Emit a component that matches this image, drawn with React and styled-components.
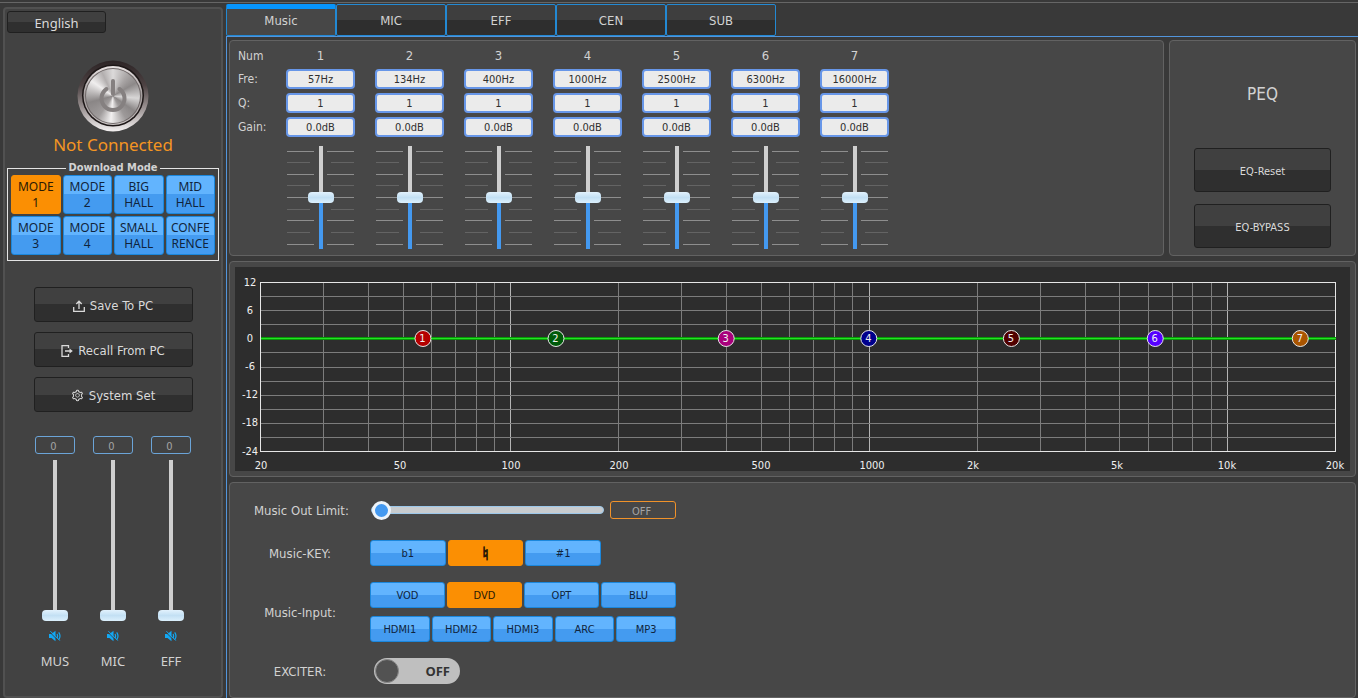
import { useState } from 'react';
import styled, { createGlobalStyle, css } from 'styled-components';
import { AiOutlineSetting } from 'react-icons/ai';

const GlobalStyle = createGlobalStyle`
    * {
        box-sizing: border-box;
    }

    body {
        margin: 0;
        background: #393939;
        color: #d2d2d2;
        font-family: "DejaVu Sans Condensed", "DejaVu Sans", sans-serif;
        font-size: 12px;
    }

    button, input {
        font-family: inherit;
        font-size: inherit;
        color: inherit;
        margin: 0;
        padding: 0;
    }
`

const Shell = styled.div`
    display: grid;
    grid-template-columns: 226px 1fr;
    min-height: 100vh;
    padding-top: 2px;
    background: linear-gradient(#666, #666) 0 2px / 100% 1px no-repeat #393939;
`

const Sidebar = styled.aside`
    display: flex;
    flex-direction: column;
    align-items: center;
    margin: 5px 3px 0;
    padding: 2px;
    border: 2px solid #515151;
    border-radius: 4px;
    background: #424242;
`

const DarkButton = styled.button`
    display: flex;
    align-items: center;
    justify-content: center;
    gap: 5px;
    width: ${({ $width }) => $width}px;
    height: ${({ $height }) => $height}px;
    padding-top: 2px;
    font-size: ${({ $size }) => $size}px;
    border: 1px solid #202020;
    border-radius: 3px;
    background: linear-gradient(#404040 50%, #2f2f2f 50%);
    color: #dadada;
`

const LanguageButton = styled(DarkButton)`
    align-self: flex-start;
    font-family: "Noto Sans", sans-serif;
`

const PowerButton = styled.button`
    display: grid;
    place-items: center;
    width: 72px;
    height: 72px;
    margin-top: 27px;
    border: none;
    border-radius: 50%;
    background: none;

    svg {
        grid-area: 1 / 1;
    }
`

const PowerFace = styled.span`
    grid-area: 1 / 1;
    width: 54px;
    height: 54px;
    border-radius: 50%;
    background: conic-gradient(#dcdada, #a9a5a5 35deg, #8d8989 60deg, #d8d6d6 95deg, #8b8787 125deg,
        #9d9999 150deg, #f2f0f0 185deg, #a09c9c 215deg, #8a8686 255deg, #f0eeee 305deg, #b2aeae 335deg, #dcdada);
`

const Status = styled.div`
    margin-top: 1px;
    font-family: "Noto Sans", sans-serif;
    font-size: 17px;
    line-height: 24px;
    color: #f49522;
`

const ModeBox = styled.fieldset`
    width: 212px;
    margin: 4px 0 0;
    padding: 0 3px 5px;
    border: 1px solid #e4e4e4;

    legend {
        margin: 0 auto;
        padding: 0 2px;
        font-size: 11px;
        font-weight: bold;
        line-height: 14px;
    }
`

const ModeGrid = styled.div`
    display: grid;
    grid-template-columns: repeat(4, 1fr);
    grid-auto-rows: 39px;
    gap: 2px;
`

const BlueButton = styled.button`
    height: 26px;
    padding-top: 1px;
    border: 1px solid #1b87dc;
    border-radius: 3px;
    background: linear-gradient(#62b4fe 50%, #449bf0 50%);
    color: #10243c;
    font-size: 11px;

    ${({ $active }) => $active && css`
        border-color: #fb8f03;
        background: #fb8f03;
        color: #2a1a04;
    `}
`

const ModeButton = styled(BlueButton)`
    height: auto;
    font-family: "Noto Sans", sans-serif;
    font-size: 12px;
    line-height: 16px;
    white-space: pre-line;
`

const Actions = styled.div`
    display: flex;
    flex-direction: column;
    gap: 10px;
    margin-top: 26px;
`

const Faders = styled.div`
    display: flex;
    gap: 18px;
    margin-top: 24px;
`

const Fader = styled.div`
    display: flex;
    flex-direction: column;
    align-items: center;
    width: 40px;

    label {
        margin-top: 10px;
        font-family: "Noto Sans", sans-serif;
        font-size: 13px;
        line-height: 18px;
    }
`

const ValueBox = styled.input`
    width: ${({ $width }) => $width}px;
    height: 18px;
    padding: 2px 3px 0 0;
    border: 1px solid ${({ $color }) => $color};
    border-radius: 3px;
    background: transparent;
    color: #a4a4a4;
    font-size: 11px;
    text-align: center;
`

const VerticalRange = styled.input`
    appearance: none;
    writing-mode: vertical-lr;
    direction: rtl;
    width: 26px;
    height: ${({ $height }) => $height}px;
    background: linear-gradient(#cfcfcf ${({ $empty }) => $empty}%, #4499f0 ${({ $empty }) => $empty}%) center / 4px 100% no-repeat;

    &::-webkit-slider-thumb {
        appearance: none;
        width: 26px;
        height: 11px;
        border-radius: 4px;
        background: linear-gradient(#e2f2fd, #c3e0f4 50%, #dcf0fc);
    }
`

const ChannelRange = styled(VerticalRange)`
    margin-top: 6px;
`

const MuteButton = styled.button`
    display: flex;
    height: 12px;
    margin-top: 9px;
    border: none;
    background: none;
`

const Main = styled.main`
    display: flex;
    flex-direction: column;
    min-width: 0;
    padding-top: 2px;
`

const Tabs = styled.nav`
    display: flex;
`

const Tab = styled.button`
    width: 110px;
    height: 32px;
    border: 1px solid #2389d3;
    border-radius: 2px;
    background: linear-gradient(#3e3e3e 50%, #2e2e2e 50%);
    font-size: 13px;

    ${({ $active }) => $active && css`
        border-top: 5px solid #0794fb;
        padding-bottom: 4px;
        background: #474747;
    `}
`

const Pane = styled.div`
    flex: 1;
    display: flex;
    flex-direction: column;
    gap: 5px;
    padding: 3px 2px 0;
    border-top: 1px solid #5295dc;
    border-left: 1px solid #5295dc;
`

const TopRow = styled.div`
    display: grid;
    grid-template-columns: 1fr 187px;
    gap: 5px;
`

const Card = styled.section`
    border: 1px solid #626262;
    border-radius: 4px;
    background: #474747;
`

const EqCard = styled(Card)`
    display: flex;
    padding: 6px 8px;
`

const EqLabels = styled.div`
    display: grid;
    grid-template-rows: 18px;
    grid-auto-rows: 20px;
    gap: 4px;
    align-content: start;
    align-items: center;
    width: 48px;
`

const Bands = styled.div`
    display: grid;
    grid-template-columns: repeat(7, 1fr);
    gap: 20px;
    width: 602px;
`

const Band = styled.div`
    display: flex;
    flex-direction: column;
    gap: 4px;
`

const BandNumber = styled.div`
    font-size: 13px;
    line-height: 18px;
    text-align: center;
`

const BandInput = styled.input`
    width: 100%;
    height: 20px;
    padding-top: 1px;
    border: 2px solid #6796e8;
    border-radius: 4px;
    background: #ebebeb;
    color: #303030;
    font-size: 11px;
    text-align: center;
`

const BandSlider = styled.div`
    display: grid;
    justify-items: center;
    margin-top: 5px;

    > * {
        grid-area: 1 / 1;
    }
`

const PeqCard = styled(Card)`
    display: flex;
    flex-direction: column;
    align-items: center;
    gap: 12px;
    padding-top: 41px;

    h2 {
        margin: 0 0 30px;
        font-size: 17px;
        font-weight: normal;
        line-height: 24px;
    }
`

const ChartCard = styled(Card)`
    padding: 5px;

    svg {
        display: block;
        width: 100%;
        height: auto;
        background: #2d2d2d;
    }
`

const SettingsCard = styled(Card)`
    flex: 1;
    padding: 17px 24px 12px;
`

const SettingRow = styled.div`
    display: grid;
    grid-template-columns: 92px 306px;
    column-gap: 24px;
    align-items: center;
    margin-bottom: ${({ $gap }) => $gap}px;
`

const SettingLabel = styled.label`
    font-size: 13px;
    text-align: center;
    white-space: nowrap;
`

const LimitControl = styled.div`
    display: flex;
    align-items: center;
    gap: 6px;
    padding-left: 1px;
`

const LimitRange = styled.input`
    appearance: none;
    flex: 1;
    min-width: 0;
    height: 20px;
    background: none;

    &::-webkit-slider-runnable-track {
        height: 8px;
        border: 1px solid #9cc8ea;
        border-radius: 4px;
        background: #c8cccf;
    }

    &::-webkit-slider-thumb {
        appearance: none;
        width: 19px;
        height: 19px;
        margin-top: -6px;
        border: 3px solid #eef4fa;
        border-radius: 50%;
        background: #4499f0;
    }
`

const ButtonRows = styled.div`
    display: flex;
    flex-direction: column;
    gap: 8px;
`

const ButtonRow = styled.div`
    display: grid;
    grid-template-columns: repeat(${({ $columns }) => $columns}, 1fr);
    gap: 2px;
    width: ${({ $width }) => $width || 306}px;
`

const Natural = styled.span`
    font-family: "DejaVu Sans", sans-serif;
    font-size: 18px;
    line-height: 20px;
    -webkit-text-stroke: 1px currentColor;
`

const Toggle = styled.label`
    display: flex;
    align-items: center;
    justify-content: space-between;
    width: 86px;
    height: 26px;
    margin-left: 4px;
    padding: 0 10px 0 1px;
    border-radius: 13px;
    background: #bfbfbf;
    color: #333;
    font-family: "Noto Sans", sans-serif;
    font-size: 13px;
    font-weight: bold;

    input {
        appearance: none;
        width: 24px;
        height: 24px;
        border: 1px solid #8b8b8b;
        border-radius: 50%;
        background: #525252;
    }
`

const modes = ['MODE\n1', 'MODE\n2', 'BIG\nHALL', 'MID\nHALL', 'MODE\n3', 'MODE\n4', 'SMALL\nHALL', 'CONFE\nRENCE'];

const tabs = ['Music', 'MIC', 'EFF', 'CEN', 'SUB'];

const bands = [
    { freq: 57, color: '#b40000' },
    { freq: 134, color: '#005a0a' },
    { freq: 400, color: '#a8007c' },
    { freq: 1000, color: '#00008c' },
    { freq: 2500, color: '#500000' },
    { freq: 6300, color: '#5500ff' },
    { freq: 16000, color: '#aa5500' },
];

const freqLabels = [
    { text: '20', x: 26 },
    { text: '50', x: 165 },
    { text: '100', x: 276 },
    { text: '200', x: 384 },
    { text: '500', x: 526 },
    { text: '1000', x: 637 },
    { text: '2k', x: 738 },
    { text: '5k', x: 882 },
    { text: '10k', x: 992 },
    { text: '20k', x: 1100 },
];

const PowerIcon = () => (
    <svg width="72" height="72" viewBox="0 0 72 72" fill="none" aria-hidden="true">
        <path d="M29.5 29a11.500 11.500 0 1 0 13 0" stroke="#858080" strokeWidth="4" strokeLinecap="round" />
        <path d="M36 21v13" stroke="#858080" strokeWidth="4" strokeLinecap="round" />
    </svg>
);

const PowerRing = () => (
    <svg width="72" height="72" viewBox="0 0 72 72" aria-hidden="true">
        <defs>
            <linearGradient id="outerRing" x1="0" y1="0" x2="0" y2="1">
                <stop offset="0" stopColor="#2c2425" />
                <stop offset="0.35" stopColor="#4d4243" />
                <stop offset="0.7" stopColor="#a39b9b" />
                <stop offset="1" stopColor="#f4f1f1" />
            </linearGradient>
            <linearGradient id="innerRing" x1="0" y1="0" x2="0" y2="1">
                <stop offset="0" stopColor="#e8e2e2" />
                <stop offset="0.5" stopColor="#a39c9c" />
                <stop offset="1" stopColor="#cbc5c5" />
            </linearGradient>
        </defs>
        <circle cx="36" cy="36" r="35.500" fill="url(#outerRing)" />
        <circle cx="36" cy="35.500" r="31" fill="#1d1717" />
        <circle cx="36" cy="35.500" r="29.500" fill="url(#innerRing)" />
        <circle cx="36" cy="36" r="28" fill="#6f6868" />
    </svg>
);

const SaveIcon = () => (
    <svg width="12" height="12" viewBox="0 0 12 12" fill="none" stroke="currentColor" strokeWidth="1.3" aria-hidden="true">
        <path d="M.7 7v4.300h10.600V7M6 9V1.500M3.300 4 6 1.200 8.700 4" />
    </svg>
);

const RecallIcon = () => (
    <svg width="12" height="12" viewBox="0 0 12 12" fill="none" stroke="currentColor" strokeWidth="1.3" aria-hidden="true">
        <path d="M7.500 3V.7H1v10.600h6.500V9M4 6h5" />
        <path d="M8.500 3.500 11.800 6 8.500 8.500z" fill="currentColor" stroke="none" />
    </svg>
);

const MuteIcon = () => (
    <svg width="12" height="12" viewBox="0 0 12 12" fill="none" aria-hidden="true">
        <path d="M0 4h2.500L6.500.8v10.400L2.500 8H0z" fill="#12a8f4" />
        <path d="M8 4q1.200 2 0 4M9.700 2.300q2.600 3.700 0 7.400" stroke="#12a8f4" strokeWidth="1.200" />
        <path d="M.6 2l9.500 9.500" stroke="#424242" strokeWidth="0.9" />
        <path d="M1.400 1.200l9.400 9.400" stroke="#12a8f4" strokeWidth="1" />
    </svg>
);

const Scale = () => (
    <svg width="69" height="103" viewBox="0 0 69 103" shapeRendering="crispEdges" aria-hidden="true">
        {[5, 16, 28, 39, 51, 63, 74, 86, 98].map((y, i) => (
            <path
                key={y}
                d={i % 2 ? `M1 ${y}.5h23M45 ${y}.5h23` : `M1 ${y}.5h27M41 ${y}.5h27`}
                stroke={i % 2 ? '#646464' : '#8e8e8e'}
            />
        ))}
    </svg>
);

const PLOT = { left: 25.5, top: 15.5, width: 1075, height: 169 };

const freqX = (freq) => PLOT.left + (Math.log10(freq / 20) / 3) * PLOT.width;
const gainY = (gain) => PLOT.top + ((12 - gain) / 36) * PLOT.height;

const gridFreqs = [10, 100, 1000, 10000]
    .flatMap((decade) => [1, 2, 3, 4, 5, 6, 7, 8, 9].map((n) => n * decade))
    .filter((freq) => freq > 20 && freq < 20000);

const ResponseChart = () => {
    const right = PLOT.left + PLOT.width;
    const bottom = PLOT.top + PLOT.height;

    return (
        <svg viewBox="0 0 1115 204" role="img" aria-label="Frequency response">
            <g shapeRendering="crispEdges">
                {gridFreqs.map((freq) => (
                    <path
                        key={freq}
                        d={`M${freqX(freq)} ${PLOT.top}V${bottom}`}
                        stroke={[100, 1000, 10000].includes(freq) ? '#b4b4b4' : '#7c7c7c'}
                    />
                ))}
                {[9, 6, 3, -3, -6, -9, -12, -15, -18, -21].map((gain) => (
                    <path key={gain} d={`M${PLOT.left} ${gainY(gain)}H${right}`} stroke="#7c7c7c" />
                ))}
                <rect x={PLOT.left} y={PLOT.top} width={PLOT.width} height={PLOT.height} fill="none" stroke="#e6e6e6" />
                <path d={`M${PLOT.left} 71.500H${right}`} stroke="#069a06" strokeWidth="3" />
                <path d={`M${PLOT.left} 71.500H${right}`} stroke="#26e026" />
            </g>
            <g fill="#f0f0f0" fontSize="11" textAnchor="middle">
                {[12, 6, 0, -6, -12, -18, -24].map((gain) => (
                    <text key={gain} x="15" y={gainY(gain) + 3}>{gain}</text>
                ))}
                {freqLabels.map(({ text, x }) => (
                    <text key={text} x={x} y="202">{text}</text>
                ))}
                {bands.map(({ freq, color }, i) => (
                    <g key={freq}>
                        <circle cx={freqX(freq) - 0.5} cy="71.500" r="8" fill={color} stroke="#e8e8e8" />
                        <text x={freqX(freq) - 1} y="75">{i + 1}</text>
                    </g>
                ))}
            </g>
        </svg>
    );
};

const Channel = ({ name }) => {
    const [level, setLevel] = useState(0);

    return (
        <Fader>
            <ValueBox $width={40} $color="#6ba4d8" aria-label={`${name} level`} value={level} readOnly />
            <ChannelRange
                id={name}
                type="range"
                $height={161}
                $empty={100 - level}
                value={level}
                onChange={(e) => setLevel(e.target.value)}
            />
            <MuteButton aria-label={`Mute ${name}`}><MuteIcon /></MuteButton>
            <label htmlFor={name}>{name}</label>
        </Fader>
    );
};

const EqBand = ({ number, freq }) => {
    const [gain, setGain] = useState(0);

    return (
        <Band>
            <BandNumber>{number}</BandNumber>
            <BandInput aria-label={`Fre ${number}`} defaultValue={`${freq}Hz`} />
            <BandInput aria-label={`Q ${number}`} defaultValue="1" />
            <BandInput aria-label={`Gain ${number}`} value={`${gain.toFixed(1)}dB`} readOnly />
            <BandSlider>
                <Scale />
                <VerticalRange
                    type="range"
                    aria-label={`Gain slider ${number}`}
                    min="-12"
                    max="12"
                    step="0.1"
                    $height={103}
                    $empty={50 - (gain / 24) * 100}
                    value={gain}
                    onChange={(e) => setGain(Number(e.target.value))}
                />
            </BandSlider>
        </Band>
    );
};

const App = () => {
    const [mode, setMode] = useState(modes[0]);
    const [tab, setTab] = useState('Music');
    const [musicKey, setMusicKey] = useState('♮');
    const [source, setSource] = useState('DVD');

    const sourceButton = (name) => (
        <BlueButton key={name} $active={source === name} onClick={() => setSource(name)}>{name}</BlueButton>
    );

    return (
        <>
            <GlobalStyle />
            <Shell>
                <Sidebar>
                    <LanguageButton $width={99} $height={22} $size={13}>English</LanguageButton>
                    <PowerButton aria-label="Connect">
                        <PowerRing />
                        <PowerFace />
                        <PowerIcon />
                    </PowerButton>
                    <Status>Not Connected</Status>
                    <ModeBox>
                        <legend>Download Mode</legend>
                        <ModeGrid>
                            {modes.map((name) => (
                                <ModeButton key={name} $active={mode === name} onClick={() => setMode(name)}>
                                    {name}
                                </ModeButton>
                            ))}
                        </ModeGrid>
                    </ModeBox>
                    <Actions>
                        <DarkButton $width={159} $height={35} $size={13}><SaveIcon />Save To PC</DarkButton>
                        <DarkButton $width={159} $height={35} $size={13}><RecallIcon />Recall From PC</DarkButton>
                        <DarkButton $width={159} $height={35} $size={13}><AiOutlineSetting />System Set</DarkButton>
                    </Actions>
                    <Faders>
                        <Channel name="MUS" />
                        <Channel name="MIC" />
                        <Channel name="EFF" />
                    </Faders>
                </Sidebar>
                <Main>
                    <Tabs>
                        {tabs.map((name) => (
                            <Tab key={name} $active={tab === name} onClick={() => setTab(name)}>{name}</Tab>
                        ))}
                    </Tabs>
                    <Pane>
                        <TopRow>
                            <EqCard>
                                <EqLabels>
                                    <span>Num</span>
                                    <span>Fre:</span>
                                    <span>Q:</span>
                                    <span>Gain:</span>
                                </EqLabels>
                                <Bands>
                                    {bands.map(({ freq }, i) => (
                                        <EqBand key={freq} number={i + 1} freq={freq} />
                                    ))}
                                </Bands>
                            </EqCard>
                            <PeqCard>
                                <h2>PEQ</h2>
                                <DarkButton $width={137} $height={44} $size={11}>EQ-Reset</DarkButton>
                                <DarkButton $width={137} $height={44} $size={11}>EQ-BYPASS</DarkButton>
                            </PeqCard>
                        </TopRow>
                        <ChartCard>
                            <ResponseChart />
                        </ChartCard>
                        <SettingsCard>
                            <SettingRow $gap={20}>
                                <SettingLabel htmlFor="limit">Music Out Limit:</SettingLabel>
                                <LimitControl>
                                    <LimitRange id="limit" type="range" defaultValue="0" />
                                    <ValueBox $width={66} $color="#f0922a" aria-label="Limit value" value="OFF" readOnly />
                                </LimitControl>
                            </SettingRow>
                            <SettingRow $gap={16}>
                                <SettingLabel as="span">Music-KEY:</SettingLabel>
                                <ButtonRow $columns={3} $width={231}>
                                    {['b1', '♮', '#1'].map((name) => (
                                        <BlueButton key={name} $active={musicKey === name} onClick={() => setMusicKey(name)}>
                                            {name === '♮' ? <Natural>{name}</Natural> : name}
                                        </BlueButton>
                                    ))}
                                </ButtonRow>
                            </SettingRow>
                            <SettingRow $gap={16}>
                                <SettingLabel as="span">Music-Input:</SettingLabel>
                                <ButtonRows>
                                    <ButtonRow $columns={4}>{['VOD', 'DVD', 'OPT', 'BLU'].map(sourceButton)}</ButtonRow>
                                    <ButtonRow $columns={5}>{['HDMI1', 'HDMI2', 'HDMI3', 'ARC', 'MP3'].map(sourceButton)}</ButtonRow>
                                </ButtonRows>
                            </SettingRow>
                            <SettingRow $gap={0}>
                                <SettingLabel htmlFor="exciter">EXCITER:</SettingLabel>
                                <Toggle>
                                    <input id="exciter" type="checkbox" />
                                    OFF
                                </Toggle>
                            </SettingRow>
                        </SettingsCard>
                    </Pane>
                </Main>
            </Shell>
        </>
    );
};

export default App;
